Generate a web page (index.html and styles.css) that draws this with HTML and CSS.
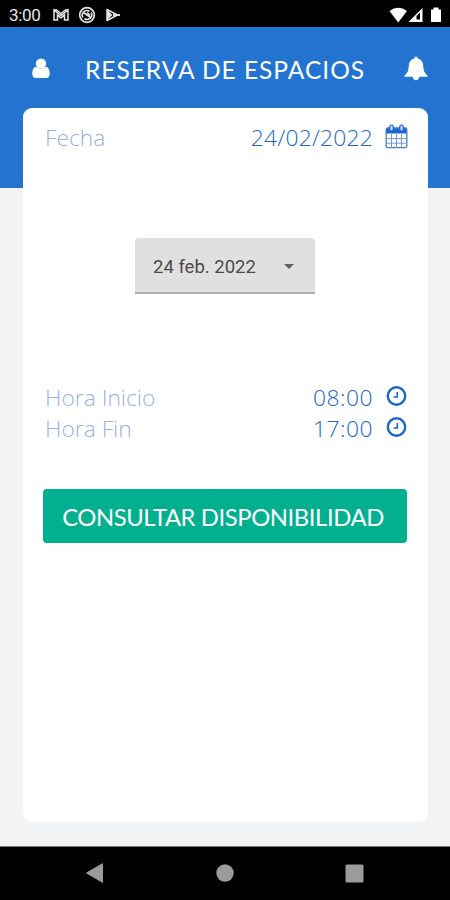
FILE: index.html
```html
<!DOCTYPE html>
<html lang="es">
<head>
  <meta charset="UTF-8" />
  <meta name="viewport" content="width=device-width, initial-scale=1.0" />
  <title>Reserva de espacios</title>
  <link rel="stylesheet" href="styles.css">
</head>
<body>
  <div class="status-bar">
    <span class="clock">3:00</span>
    <svg class="status-left" width="70" height="18" viewBox="0 0 70 18" fill="none" stroke="#e6e6e6">
      <path d="M3 14V4l7 5.500L17 4v10h-3.500V9L10 12 6.500 9v5z" stroke-width="1.500" />
      <path d="M3 4h2.500L10 7.500 14.500 4H17" stroke-width="1.300" />
      <circle cx="36" cy="9" r="7.300" stroke-width="1.700" />
      <path d="M32 11.500a4.500 4.500 0 0 1 6.500-6M40 6.500a4.500 4.500 0 0 1-6.500 6M33 7l6 4M36 6.500l3 3" stroke-width="1.600" />
      <path d="M56 3.500v11L66.500 9z" stroke-width="1.500" stroke-linejoin="round" />
      <path d="M56 4l5.500 5-5.500 5z" fill="#e6e6e6" stroke="none" />
      <path d="M62 9h7" stroke-width="1.800" />
    </svg>
    <svg class="status-right" width="54" height="18" viewBox="0 0 54 18" fill="#fff">
      <path d="M0.500 5Q9.200-1.500 18 5L9.200 16.500z" />
      <path d="M19.500 16L33.500 2v14z" />
      <path d="M27.500 10l3.500-3.500v7h-3.500z" fill="#000" />
      <path d="M42 3.500h2.500v-2h5v2H52V16H42z" />
    </svg>
  </div>

  <div class="screen">
    <header class="header">
      <svg class="icon-user" width="18" height="21" viewBox="0 0 18 21" fill="#fff">
        <circle cx="9" cy="5.600" r="5.200" />
        <path d="M4 8.800Q9 13 14 8.800c2.600.4 3.700 3.200 3.700 7.200 0 2.600-1.400 4-3.400 4H3.700C1.700 20 .3 18.600.3 16c0-4 1.100-6.800 3.700-7.200z" />
      </svg>
      <h1>RESERVA DE ESPACIOS</h1>
      <svg class="icon-bell" width="24" height="25" viewBox="0 0 24 25" fill="#fff">
        <path d="M12 .5c1 0 1.700.7 1.600 1.900 3.500.7 5.400 3.300 5.600 7.200.2 4.900 1.200 7.600 4.300 9.900v1.300h-8.200c-.2 2-1.500 3.400-3.300 3.400s-3.100-1.400-3.300-3.400H.5v-1.300c3.100-2.300 4.100-5 4.300-9.900.2-3.900 2.100-6.500 5.600-7.200C10.300 1.200 11 .5 12 .5z" />
      </svg>
    </header>

    <main class="card">
      <div class="row row-date">
        <span class="label">Fecha</span>
        <span class="value value-date">24/02/2022</span>
        <svg class="icon" width="23" height="25" viewBox="0 0 23 25">
          <path d="M1 4h21v5.500H1z" fill="#1c66c8" />
          <rect x="1.200" y="4" width="20.600" height="19.600" rx="1.500" fill="none" stroke="#3f7ccf" stroke-width="1.300" />
          <path d="M6.500 10v14M11.500 10v14M16.500 10v14M1.500 14.500h20M1.500 19.200h20" stroke="#6f9cdd" stroke-width="1" />
          <rect x="4.800" y="1" width="3.400" height="6" rx="1.600" fill="#cfdef5" stroke="#1c66c8" stroke-width="1.200" />
          <rect x="14.800" y="1" width="3.400" height="6" rx="1.600" fill="#cfdef5" stroke="#1c66c8" stroke-width="1.200" />
        </svg>
      </div>

      <div class="date-select">
        <span>24 feb. 2022</span>
        <i class="caret"></i>
      </div>

      <div class="row">
        <span class="label">Hora Inicio</span>
        <span class="value">08:00</span>
        <svg class="icon" width="23" height="23" viewBox="0 0 23 23" fill="none" stroke="#1c66c8">
          <circle cx="11.500" cy="11" r="8.700" stroke-width="2.400" />
          <path d="M12.300 7v5H8.500" stroke-width="1.600" />
        </svg>
      </div>
      <div class="row">
        <span class="label">Hora Fin</span>
        <span class="value">17:00</span>
        <svg class="icon" width="23" height="23" viewBox="0 0 23 23" fill="none" stroke="#1c66c8">
          <circle cx="11.500" cy="11" r="8.700" stroke-width="2.400" />
          <path d="M12.300 7v5H8.500" stroke-width="1.600" />
        </svg>
      </div>

      <button class="submit" type="button">CONSULTAR DISPONIBILIDAD</button>
    </main>
  </div>

  <nav class="nav-bar">
    <svg width="18" height="20" viewBox="0 0 18 20" fill="#9b9b9b"><path d="M.5 10L16.500.700v18.600z" stroke="#9b9b9b" stroke-linejoin="round" /></svg>
    <svg width="18" height="18" viewBox="0 0 18 18" fill="#9b9b9b"><circle cx="9" cy="9" r="8.700" /></svg>
    <svg width="19" height="19" viewBox="0 0 19 19" fill="#9b9b9b"><rect x=".5" y=".5" width="18" height="18" rx="1.500" /></svg>
  </nav>
</body>
</html>
```

FILE: styles.css
```css
* {
  box-sizing: border-box;
}
body {
  margin: 0;
  width: 450px;
  height: 900px;
  display: flex;
  flex-direction: column;
  overflow: hidden;
  font-family: Lato, "Open Sans", sans-serif;
}
.status-bar {
  height: 27px;
  background: #000;
  color: #e6e6e6;
  display: flex;
  align-items: center;
  padding: 2px 7px 0 9px;
}
.clock {
  font-family: Roboto, sans-serif;
  font-size: 17px;
  letter-spacing: -0.3px;
  width: 42px;
}
.status-right {
  margin-left: auto;
}
.screen {
  flex: 1;
  padding: 0 22px 24px 23px;
  display: flex;
  flex-direction: column;
  background: linear-gradient(#2373d1 161px, #f2f4f6 161px);
}
.header {
  height: 81px;
  display: flex;
  align-items: center;
  padding: 2px 0 0 9px;
  color: #fff;
}
h1 {
  margin: 2px 0 0 35px;
  width: 282px;
  font-size: 24.5px;
  line-height: 30px;
  font-weight: 400;
  letter-spacing: 0.98px;
  white-space: nowrap;
}
.icon-bell {
  margin-left: auto;
}
.card {
  flex: 1;
  background: #fff;
  border-radius: 9px;
  padding: 13px 20px 0 20px;
}
.row {
  height: 31px;
  display: flex;
  align-items: center;
  font-family: "Open Sans", sans-serif;
  font-size: 22.8px;
  line-height: 31px;
  font-weight: 300;
}
.label {
  color: #9cafe4;
  padding: 1px 0 0 2px;
}
.value {
  margin-left: auto;
  padding-top: 1px;
  margin-right: 12px;
  letter-spacing: 0.5px;
  color: #1c66c8;
}
.value-date {
  letter-spacing: 0.25px;
}
.date-select {
  width: 180px;
  height: 56px;
  margin: 86px auto 87px 92px;
  padding: 3px 21px 0 18px;
  display: flex;
  align-items: center;
  justify-content: space-between;
  background: #e0e0e0;
  border-bottom: 2px solid #adadad;
  border-radius: 4px 4px 0 0;
  font-family: Roboto, sans-serif;
  font-size: 18.5px;
  color: #4a4a4a;
}
.caret {
  border: 5.5px solid transparent;
  border-top-color: #616161;
  border-bottom: 0;
}
.submit {
  display: block;
  width: 364px;
  height: 54px;
  margin-top: 46px;
  padding: 2px 4px 0 0;
  border: 0;
  border-radius: 4px;
  background: #02b08f;
  color: #fff;
  font-family: Lato, sans-serif;
  font-size: 23.8px;
  letter-spacing: -0.4px;
  white-space: nowrap;
}
.nav-bar {
  height: 54px;
  background: #000;
  border-top: 1px solid #777;
  display: flex;
  align-items: center;
  justify-content: space-between;
  padding: 0 86px 1px 86px;
}
```
